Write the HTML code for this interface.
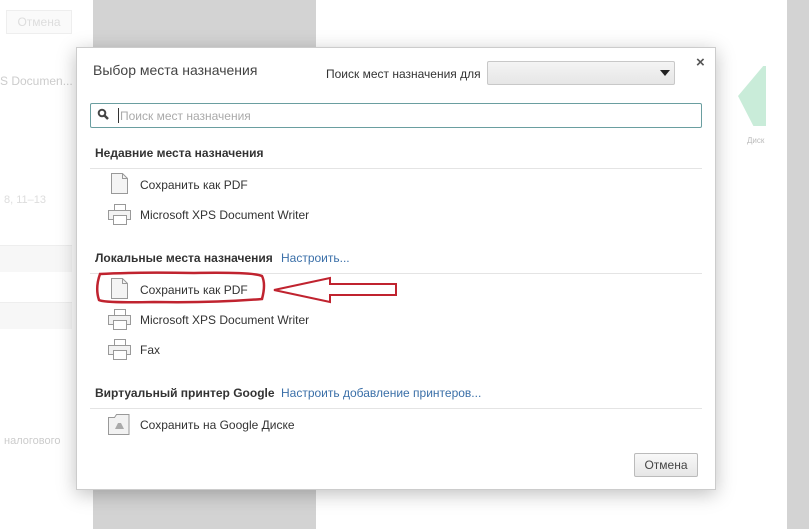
<!DOCTYPE html>
<html><head><meta charset="utf-8"><style>
*{box-sizing:border-box;margin:0;padding:0}
body{width:809px;height:529px;position:relative;overflow:hidden;background:#fff;font-family:"Liberation Sans","DejaVu Sans",sans-serif;color:#333}
.abs{position:absolute}
.t{position:absolute;font-size:12px;color:#333;white-space:nowrap}
.b{font-weight:bold;font-size:12px;color:#333}
.lnk{color:#3a6fa8}
.hr{position:absolute;left:90px;width:612px;height:1px;background:#e4e4e4}
</style></head><body>
<div class="abs" style="left:93px;top:0;width:223px;height:529px;background:#d3d3d3"></div>
<div class="abs" style="left:787px;top:0;width:22px;height:529px;background:#d3d3d3"></div>
<div class="abs" style="left:6px;top:10px;width:66px;height:24px;border:1px solid #eee;background:#fafafa;color:#ddd;font-size:12px;text-align:center;line-height:22px">Отмена</div>
<div class="t" style="left:0;top:74px;color:#ccc">S Documen...</div>
<div class="t" style="left:4px;top:194px;color:#ddd;font-size:11px">8, 11–13</div>
<div class="abs" style="left:0;top:245px;width:72px;height:27px;background:#f7f7f7;border-top:1px solid #eee"></div>
<div class="abs" style="left:0;top:302px;width:72px;height:27px;background:#f7f7f7;border-top:1px solid #eee"></div>
<div class="t" style="left:4px;top:435px;color:#ccc;font-size:11px">налогового</div>
<div class="abs" style="left:738px;top:66px;width:28px;height:60px;background:#c9ecd9;clip-path:polygon(90% 0,100% 0,100% 100%,55% 100%,0 50%)"></div>
<div class="t" style="left:747px;top:136px;font-size:8px;color:#bbb">Диск</div>

<div class="abs" style="left:76px;top:47px;width:640px;height:443px;background:#fff;border:1px solid #ccc;box-shadow:0 4px 18px rgba(0,0,0,.25)"></div>
<div class="t" style="left:93px;top:62px;font-size:14px;color:#444">Выбор места назначения</div>
<div class="t" style="left:326px;top:67px;font-size:12px">Поиск мест назначения для</div>
<div class="abs" style="left:487px;top:61px;width:188px;height:24px;border:1px solid #c8c8c8;border-radius:2px;background:linear-gradient(#f4f4f4,#e6e6e6)"></div>
<div class="abs" style="left:660px;top:70px;border-left:5px solid transparent;border-right:5px solid transparent;border-top:6px solid #222"></div>
<div class="t" style="left:696px;top:54px;font-size:15px;font-weight:bold;color:#555">×</div>
<div class="abs" style="left:90px;top:103px;width:612px;height:25px;border:1px solid #6a9ea0;border-radius:2px"></div>
<svg class="abs" style="left:97px;top:108px" width="14" height="14"><circle cx="5" cy="5" r="3.3" fill="none" stroke="#444" stroke-width="2"/><line x1="7.5" y1="7.5" x2="11" y2="11" stroke="#444" stroke-width="2.5"/></svg>
<div class="abs" style="left:118px;top:108px;width:1px;height:15px;background:#333"></div>
<div class="t" style="left:120px;top:109px;color:#aaa">Поиск мест назначения</div>

<div class="t b" style="left:95px;top:146px">Недавние места назначения</div>
<div class="hr" style="top:168px"></div>

<svg width="0" height="0" style="position:absolute"><defs>
<g id="doc"><path d="M1.5 .5h11l5 5v15h-16z" fill="#f4f4f4" stroke="#999"/><path d="M12.5 .5v5h5" fill="none" stroke="#999"/></g>
<g id="pr"><rect x="6.5" y=".5" width="11" height="6" fill="#fff" stroke="#999"/><rect x=".5" y="6.5" width="22" height="9" fill="#f2f2f2" stroke="#999"/><rect x="5.5" y="11.5" width="13" height="9" fill="#fff" stroke="#999"/></g>
</defs></svg>
<svg class="abs" style="left:110px;top:173px" width="20" height="22"><use href="#doc"/></svg>
<div class="t" style="left:140px;top:178px">Сохранить как PDF</div>
<svg class="abs" style="left:108px;top:204px" width="24" height="22"><use href="#pr"/></svg>
<div class="t" style="left:140px;top:208px">Microsoft XPS Document Writer</div>

<div class="t b" style="left:95px;top:251px">Локальные места назначения</div>
<div class="t lnk" style="left:281px;top:251px">Настроить...</div>
<div class="hr" style="top:273px"></div>
<svg class="abs" style="left:110px;top:278px" width="20" height="22"><use href="#doc"/></svg>
<div class="t" style="left:140px;top:283px">Сохранить как PDF</div>
<svg class="abs" style="left:94px;top:270px" width="310" height="36"><path d="M6 4 Q40 2 100 3 Q160 2 168 6 Q172 14 168 29 Q120 33 60 32 Q10 33 5 30 Q1 18 6 4Z" fill="none" stroke="#c0232f" stroke-width="2.5"/><path d="M180 20 L236 8 L236 14 L302 14 L302 25 L236 25 L236 32 Z" fill="none" stroke="#c0232f" stroke-width="2"/></svg>
<svg class="abs" style="left:108px;top:309px" width="24" height="22"><use href="#pr"/></svg>
<div class="t" style="left:140px;top:313px">Microsoft XPS Document Writer</div>
<svg class="abs" style="left:108px;top:339px" width="24" height="22"><use href="#pr"/></svg>
<div class="t" style="left:140px;top:343px">Fax</div>

<div class="t b" style="left:95px;top:386px">Виртуальный принтер Google</div>
<div class="t lnk" style="left:281px;top:386px">Настроить добавление принтеров...</div>
<div class="hr" style="top:408px"></div>
<svg class="abs" style="left:108px;top:414px" width="22" height="21"><path d="M.5 3.5h6l2-3h12.5v20h-20.5z" fill="#f2f2f2" stroke="#999"/><path d="M7 15l3-6h3l3 6z" fill="#aaa"/></svg>
<div class="t" style="left:140px;top:418px">Сохранить на Google Диске</div>

<div class="abs" style="left:634px;top:453px;width:64px;height:24px;border:1px solid #bbb;border-radius:2px;background:linear-gradient(#f8f8f8,#e6e6e6);font-size:12px;color:#444;text-align:center;line-height:22px">Отмена</div>
</body></html>
